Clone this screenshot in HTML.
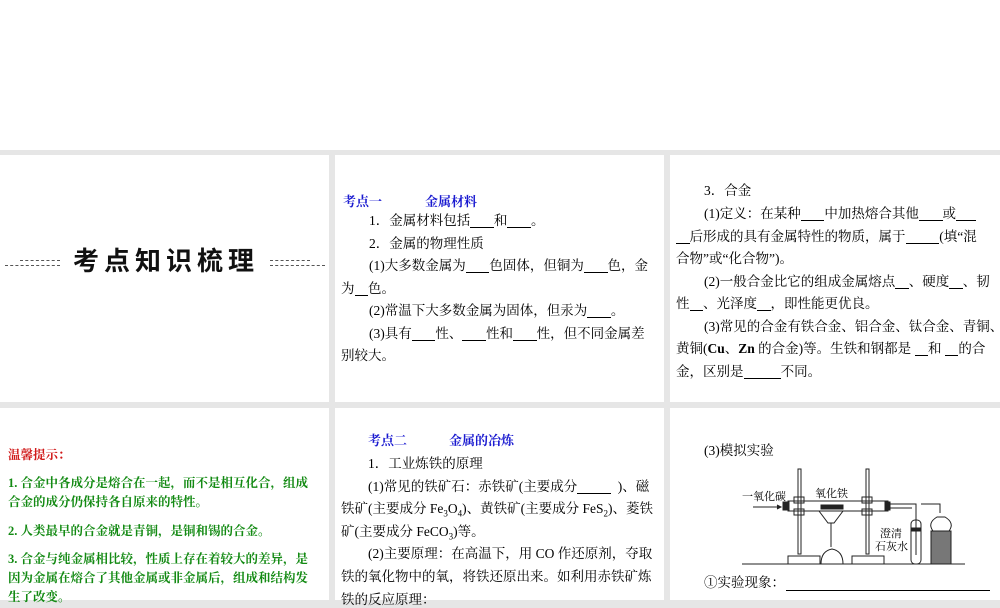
<!DOCTYPE html>
<html><head><meta charset="utf-8"><style>
body{margin:0;width:1000px;height:600px;overflow:hidden;background:#e6e6e6;position:relative;font-family:"Liberation Serif","Noto Serif CJK SC",serif;}
.p{position:absolute;background:#fff;overflow:hidden}
.l{position:absolute;white-space:nowrap;font-size:13.5px;line-height:16px;color:#000}
.b{color:#1a1ad0;font-weight:bold;font-size:13px}
.g{color:#138a13;font-size:12.5px;font-weight:bold;font-family:"Liberation Serif","Noto Serif CJK SC",serif}
u{text-decoration:none;border-bottom:1px solid #000;display:inline-block;line-height:13px}
</style></head><body>
<div class="p" style="left:0;top:0;width:1000px;height:150px"></div>
<div class="p" style="left:0;top:155px;width:329px;height:247px">
 <div style="position:absolute;left:5px;top:110px;width:55px;border-top:1px dashed #555"></div>
 <div style="position:absolute;left:20px;top:105px;width:40px;border-top:1px dashed #555"></div>
 <div style="position:absolute;left:270px;top:110px;width:55px;border-top:1px dashed #555"></div>
 <div style="position:absolute;left:270px;top:105px;width:40px;border-top:1px dashed #555"></div>
 <div style="position:absolute;left:73px;top:86px;font-family:'Liberation Sans','Noto Sans CJK SC',sans-serif;font-weight:bold;font-size:26px;letter-spacing:5px;color:#111">考点知识梳理</div>
</div>
<div class="p" style="left:335px;top:155px;width:329px;height:247px"></div>
<div class="p" style="left:670px;top:155px;width:330px;height:247px"></div>
<div class="p" style="left:0;top:408px;width:329px;height:192px"></div>
<div class="p" style="left:335px;top:408px;width:329px;height:192px"></div>
<div class="p" style="left:670px;top:408px;width:330px;height:192px"></div>

<div class="l b" style="left:343px;top:194px">考点一</div>
<div class="l b" style="left:425px;top:194px">金属材料</div>
<div class="l" style="left:369px;top:213px">1．金属材料包括<u>&nbsp;&nbsp;&nbsp;&nbsp;&nbsp;&nbsp;&nbsp;</u>和<u>&nbsp;&nbsp;&nbsp;&nbsp;&nbsp;&nbsp;&nbsp;</u>。</div>
<div class="l" style="left:369px;top:236px">2．金属的物理性质</div>
<div class="l" style="left:369px;top:258px">(1)大多数金属为<u>&nbsp;&nbsp;&nbsp;&nbsp;&nbsp;&nbsp;&nbsp;</u>色固体，但铜为<u>&nbsp;&nbsp;&nbsp;&nbsp;&nbsp;&nbsp;&nbsp;</u>色，金</div>
<div class="l" style="left:341px;top:281px">为<u>&nbsp;&nbsp;&nbsp;&nbsp;</u>色。</div>
<div class="l" style="left:369px;top:303px">(2)常温下大多数金属为固体，但汞为<u>&nbsp;&nbsp;&nbsp;&nbsp;&nbsp;&nbsp;&nbsp;</u>。</div>
<div class="l" style="left:369px;top:326px">(3)具有<u>&nbsp;&nbsp;&nbsp;&nbsp;&nbsp;&nbsp;&nbsp;</u>性、<u>&nbsp;&nbsp;&nbsp;&nbsp;&nbsp;&nbsp;&nbsp;</u>性和<u>&nbsp;&nbsp;&nbsp;&nbsp;&nbsp;&nbsp;&nbsp;</u>性，但不同金属差</div>
<div class="l" style="left:341px;top:348px">别较大。</div>

<div class="l" style="left:704px;top:183px">3．合金</div>
<div class="l" style="left:704px;top:206px">(1)定义：在某种<u>&nbsp;&nbsp;&nbsp;&nbsp;&nbsp;&nbsp;&nbsp;</u>中加热熔合其他<u>&nbsp;&nbsp;&nbsp;&nbsp;&nbsp;&nbsp;&nbsp;</u>或<u>&nbsp;&nbsp;&nbsp;&nbsp;&nbsp;&nbsp;</u></div>
<div class="l" style="left:676px;top:229px"><u>&nbsp;&nbsp;&nbsp;&nbsp;</u>后形成的具有金属特性的物质，属于<u>&nbsp;&nbsp;&nbsp;&nbsp;&nbsp;&nbsp;&nbsp;&nbsp;&nbsp;&nbsp;</u>(填“混</div>
<div class="l" style="left:676px;top:251px">合物”或“化合物”)。</div>
<div class="l" style="left:704px;top:274px">(2)一般合金比它的组成金属熔点<u>&nbsp;&nbsp;&nbsp;&nbsp;</u>、硬度<u>&nbsp;&nbsp;&nbsp;&nbsp;</u>、韧</div>
<div class="l" style="left:676px;top:296px">性<u>&nbsp;&nbsp;&nbsp;&nbsp;</u>、光泽度<u>&nbsp;&nbsp;&nbsp;&nbsp;</u>，即性能更优良。</div>
<div class="l" style="left:704px;top:319px">(3)常见的合金有铁合金、铝合金、钛合金、青铜、</div>
<div class="l" style="left:676px;top:341px">黄铜(<b>Cu</b>、<b>Zn</b> 的合金)等。生铁和钢都是 <u>&nbsp;&nbsp;&nbsp;&nbsp;</u>和 <u>&nbsp;&nbsp;&nbsp;&nbsp;</u>的合</div>
<div class="l" style="left:676px;top:364px">金，区别是<u>&nbsp;&nbsp;&nbsp;&nbsp;&nbsp;&nbsp;&nbsp;&nbsp;&nbsp;&nbsp;&nbsp;</u>不同。</div>

<div class="l" style="left:8px;top:447px;color:#d01818;font-size:12.5px;font-weight:bold">温馨提示：</div>
<div class="l g" style="left:8px;top:475px">1. 合金中各成分是熔合在一起，而不是相互化合，组成</div>
<div class="l g" style="left:8px;top:494px">合金的成分仍保持各自原来的特性。</div>
<div class="l g" style="left:8px;top:523px">2. 人类最早的合金就是青铜，是铜和锡的合金。</div>
<div class="l g" style="left:8px;top:551px">3. 合金与纯金属相比较，性质上存在着较大的差异，是</div>
<div class="l g" style="left:8px;top:570px">因为金属在熔合了其他金属或非金属后，组成和结构发</div>
<div class="l g" style="left:8px;top:589px">生了改变。</div>

<div class="l b" style="left:368px;top:433px">考点二</div>
<div class="l b" style="left:449px;top:433px">金属的冶炼</div>
<div class="l" style="left:368px;top:456px">1．工业炼铁的原理</div>
<div class="l" style="left:368px;top:479px">(1)常见的铁矿石：赤铁矿(主要成分<u>&nbsp;&nbsp;&nbsp;&nbsp;&nbsp;&nbsp;&nbsp;&nbsp;&nbsp;&nbsp;</u>&nbsp;&nbsp;)、磁</div>
<div class="l" style="left:341px;top:501px">铁矿(主要成分 Fe<sub style="font-size:9px">3</sub>O<sub style="font-size:9px">4</sub>)、黄铁矿(主要成分 FeS<sub style="font-size:9px">2</sub>)、菱铁</div>
<div class="l" style="left:341px;top:524px">矿(主要成分 FeCO<sub style="font-size:9px">3</sub>)等。</div>
<div class="l" style="left:368px;top:546px">(2)主要原理：在高温下，用 CO 作还原剂，夺取</div>
<div class="l" style="left:341px;top:569px">铁的氧化物中的氧，将铁还原出来。如利用赤铁矿炼</div>
<div class="l" style="left:341px;top:592px">铁的反应原理：</div>

<div class="l" style="left:704px;top:443px">(3)模拟实验</div>
<svg style="position:absolute;left:735px;top:465px" width="230" height="100" viewBox="0 0 230 100" fill="none" stroke="#222" stroke-width="1">
 <line x1="7" y1="99" x2="230" y2="99"/>
 <rect x="63" y="4" width="3" height="85"/><rect x="131" y="4" width="3" height="85"/>
 <rect x="53" y="91" width="32" height="8"/><rect x="117" y="91" width="32" height="8"/>
 <rect x="53" y="36" width="100" height="10"/>
 <rect x="59" y="32" width="10" height="6"/><rect x="59" y="44" width="10" height="6"/>
 <rect x="127" y="32" width="10" height="6"/><rect x="127" y="44" width="10" height="6"/>
 <rect x="48" y="37" width="6" height="8" fill="#222"/><rect x="150" y="37" width="5" height="8" fill="#222"/>
 <line x1="18" y1="42" x2="44" y2="42"/><path d="M42 40 L46 42 L42 44" fill="#222"/>
 <rect x="86" y="40" width="22" height="4" fill="#222"/>
 <path d="M84 46 L108 46 L99 58 L93 58 Z"/><line x1="96" y1="58" x2="96" y2="82"/>
 <path d="M86 99 Q86 86 97 84 Q108 86 108 99"/>
 <path d="M155 39 L181 39 L181 90 M155 43 L177 43"/>
 <rect x="176" y="55" width="10" height="44" rx="4"/>
 <rect x="176" y="63" width="10" height="3" fill="#222"/>
 <path d="M186 39 L205 39 L205 48"/>
 <rect x="196" y="66" width="20" height="33" fill="#777"/>
 <path d="M198 66 Q192 58 202 52 L210 52 Q220 58 214 66"/>
</svg>
<div class="l" style="left:742px;top:489px;font-size:11px">一氧化碳</div>
<div class="l" style="left:815px;top:486px;font-size:11px">氧化铁</div>
<div class="l" style="left:880px;top:526px;font-size:11px">澄清</div>
<div class="l" style="left:875px;top:539px;font-size:11px">石灰水</div>
<div class="l" style="left:704px;top:575px">①实验现象：</div>
<div style="position:absolute;left:786px;top:590px;width:204px;border-top:1px solid #000"></div>
</body></html>
